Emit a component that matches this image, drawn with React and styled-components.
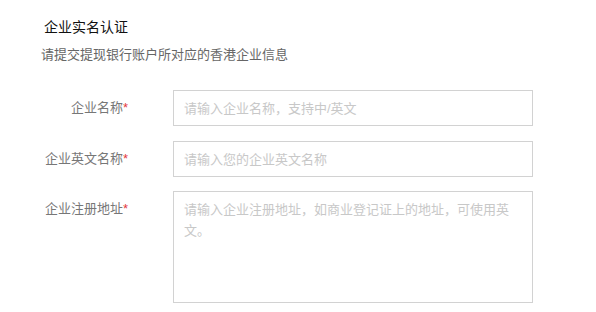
import React from 'react'
import styled, { createGlobalStyle } from 'styled-components'

const GlobalStyle = createGlobalStyle`
  html, body {
    margin: 0;
    padding: 0;
    background: #fff;
  }
  body {
    font-family: "Liberation Sans", "Noto Sans CJK SC", sans-serif;
    width: 596px;
    height: 312px;
    overflow: hidden;
  }
`

const Page = styled.div`
  padding: 17px 0 0 0;
`

const Title = styled.div`
  padding-left: 44px;
  font-size: 14px;
  line-height: 20px;
  color: #111;
`

const Intro = styled.div`
  padding-left: 41px;
  margin-top: 8px;
  font-size: 13px;
  line-height: 20px;
  color: #666;
`

const Form = styled.div`
  margin-top: 25px;
  display: flex;
  flex-direction: column;
  gap: 15px;
`

const Row = styled.div`
  display: flex;
  align-items: ${p => (p.$top ? 'flex-start' : 'center')};
  margin-top: ${p => (p.$top ? '-1px' : '0')};
`

const Label = styled.label`
  width: 128px;
  flex: none;
  text-align: right;
  font-size: 13px;
  line-height: 20px;
  color: #777;
  margin-right: 45px;
  padding-top: ${p => (p.$top ? '8px' : '0')};
`

const Star = styled.span`
  color: #e4393c;
`

const fieldBase = `
  box-sizing: border-box;
  width: 360px;
  border: 1px solid #d2d2d2;
  border-radius: 0;
  outline: none;
  font-family: "Liberation Sans", "Noto Sans CJK SC", sans-serif;
  font-size: 13px;
  color: #333;
  background: #fff;
  margin: 0;
  &::placeholder {
    color: #c8c8c8;
    opacity: 1;
  }
`

const TextInput = styled.input`
  ${fieldBase}
  height: 36px;
  padding: 0 10px;
`

const TextArea = styled.textarea`
  ${fieldBase}
  height: 112px;
  padding: 7px 16px 7px 10px;
  line-height: 21px;
  resize: none;
  overflow: hidden;
`

export default function App() {
  return (
    <>
      <GlobalStyle />
      <Page>
        <Title>企业实名认证</Title>
        <Intro>请提交提现银行账户所对应的香港企业信息</Intro>
        <Form>
          <Row>
            <Label>企业名称<Star>*</Star></Label>
            <TextInput placeholder="请输入企业名称，支持中/英文" />
          </Row>
          <Row>
            <Label>企业英文名称<Star>*</Star></Label>
            <TextInput placeholder="请输入您的企业英文名称" />
          </Row>
          <Row $top>
            <Label $top>企业注册地址<Star>*</Star></Label>
            <TextArea placeholder="请输入企业注册地址，如商业登记证上的地址，可使用英文。" />
          </Row>
        </Form>
      </Page>
    </>
  )
}
